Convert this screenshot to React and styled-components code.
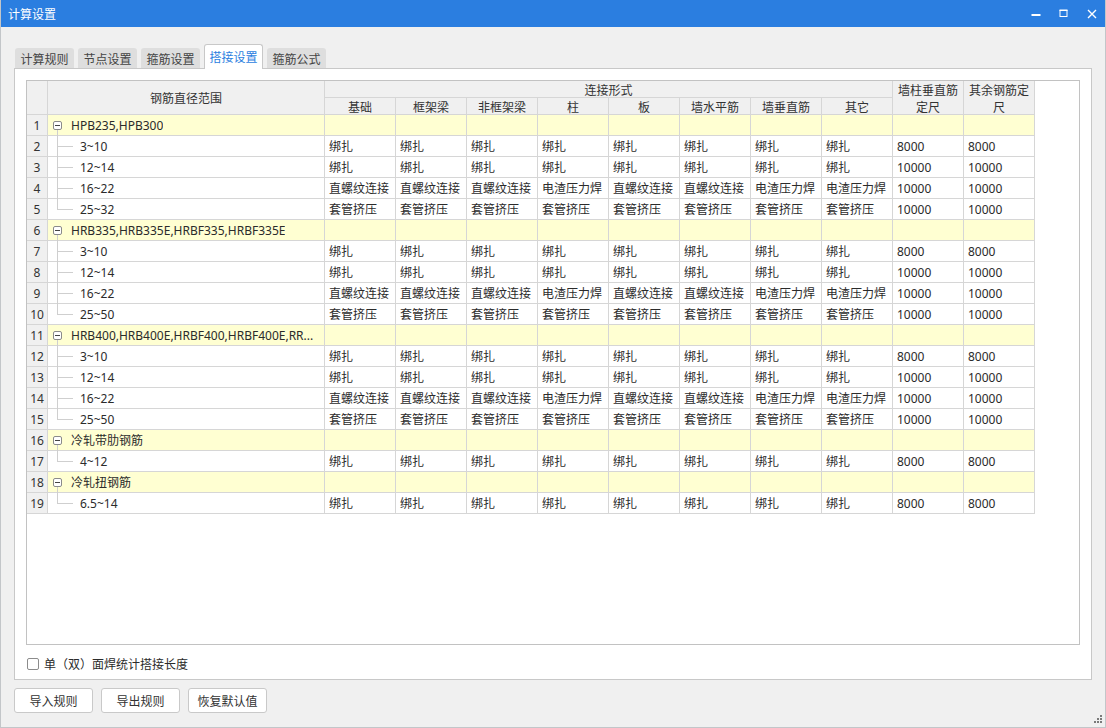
import styled, { createGlobalStyle } from 'styled-components'

const GlobalStyle = createGlobalStyle`
  html, body {
    margin: 0;
    padding: 0;
    background: #f0f0f0;
  }
  body {
    font-family: "Noto Sans", "Noto Sans CJK SC", sans-serif;
    font-size: 12px;
    color: #2b2b2b;
  }
`

const COLS = '21px 277px repeat(10, 71px)'
const LINE = '#d6d6d6'

const Window = styled.div`
  position: relative;
  width: 1106px;
  height: 728px;
  box-sizing: border-box;
  background: #f0f0f0;
  border: 1px solid #c3c6c9;
  border-top: none;
  display: flex;
  flex-direction: column;
  overflow: hidden;
`

const TitleBar = styled.div`
  height: 27px;
  margin: 0 -1px;
  background: #2b7ee0;
  display: flex;
  align-items: center;
  justify-content: space-between;
  padding: 0 0 0 8px;
  flex: none;
`

const TitleText = styled.span`
  color: #fff;
  font-size: 12px;
  font-family: "Noto Sans CJK SC", sans-serif;
`

const Controls = styled.div`
  display: flex;
  align-items: center;
  height: 100%;
`

const ControlButton = styled.span`
  width: 28px;
  height: 27px;
  display: flex;
  align-items: center;
  justify-content: center;
`

const Body = styled.div`
  padding: 17px 0 0 13px;
  display: flex;
  flex-direction: column;
`

const TabBar = styled.div`
  display: flex;
  align-items: flex-end;
  gap: 4px;
  height: 24px;
  padding-left: 1px;
`

const Tab = styled.div`
  box-sizing: border-box;
  width: 59px;
  height: ${p => (p.$active ? '25px' : '20px')};
  margin-bottom: ${p => (p.$active ? '-1px' : '0')};
  position: relative;
  z-index: ${p => (p.$active ? 1 : 0)};
  display: flex;
  align-items: center;
  justify-content: center;
  padding-bottom: ${p => (p.$active ? '2px' : '0')};
  background: ${p => (p.$active ? '#fff' : '#dedede')};
  border: ${p => (p.$active ? '1px solid #c8c8c8' : 'none')};
  border-bottom: none;
  border-radius: 3px 3px 0 0;
  color: ${p => (p.$active ? '#2b7ee0' : '#444')};
  font-family: "Noto Sans CJK SC", sans-serif;
`

const Panel = styled.div`
  box-sizing: border-box;
  width: 1078px;
  height: 612px;
  background: #fff;
  border: 1px solid #c8c8c8;
  padding: 11px 11px 0 11px;
  display: flex;
  flex-direction: column;
`

const GridFrame = styled.div`
  box-sizing: border-box;
  width: 1054px;
  height: 565px;
  border: 1px solid #c2c2c2;
  background: #fff;
  overflow: hidden;
`

const Header = styled.div`
  display: grid;
  grid-template-columns: ${COLS};
  grid-template-rows: 17px 17px;
  width: max-content;
`

const HeaderCell = styled.div`
  grid-column: ${p => p.$col};
  grid-row: ${p => p.$row};
  box-sizing: border-box;
  background: #f0f0f0;
  border-right: 1px solid ${LINE};
  border-bottom: 1px solid ${LINE};
  display: flex;
  align-items: center;
  justify-content: center;
  text-align: center;
  line-height: 17px;
  padding: ${p => (p.$wrap ? '0 4px' : '0')};
  color: #333;
  font-family: "Noto Sans CJK SC", sans-serif;
`

const Row = styled.div`
  display: grid;
  grid-template-columns: ${COLS};
  height: 21px;
  width: max-content;
  background: ${p => (p.$group ? '#ffffd2' : '#fff')};
`

const Cell = styled.div`
  box-sizing: border-box;
  border-right: 1px solid ${LINE};
  border-bottom: 1px solid ${LINE};
  display: flex;
  align-items: center;
  padding: 0 4px;
  white-space: nowrap;
  overflow: hidden;
`

const RowNum = styled(Cell)`
  background: #f0f0f0;
  justify-content: center;
  padding: 0;
  color: #333;
`

const NameCell = styled(Cell)`
  padding: 0 0 0 ${p => (p.$group ? '5px' : '9px')};
  align-items: ${p => (p.$group ? 'center' : 'stretch')};
  overflow: visible;
`

const Toggle = styled.span`
  position: relative;
  display: flex;
  width: 9px;
  height: 9px;

  &::after {
    content: '';
    position: absolute;
    left: 4px;
    top: 9px;
    height: 8px;
    border-left: 1px solid #cfcfcf;
  }
`

const GroupLabel = styled.span`
  margin-left: 9px;
  overflow: hidden;
  text-overflow: ellipsis;
  max-width: 250px;
`

const Guide = styled.span`
  position: relative;
  width: 16px;
  flex: none;

  &::before {
    content: '';
    position: absolute;
    left: 0;
    top: 0;
    bottom: ${p => (p.$last ? '50%' : '-1px')};
    border-left: 1px solid #cfcfcf;
  }

  &::after {
    content: '';
    position: absolute;
    left: 0;
    top: 50%;
    width: 16px;
    border-top: 1px solid #cfcfcf;
  }
`

const ChildLabel = styled.span`
  margin-left: 7px;
  display: flex;
  align-items: center;
`

const CheckRow = styled.label`
  display: flex;
  align-items: center;
  gap: 5px;
  margin: 10px 0 0 1px;
  font-family: "Noto Sans CJK SC", sans-serif;
`

const CheckBox = styled.span`
  box-sizing: border-box;
  width: 12px;
  height: 12px;
  border: 1px solid #8c8c8c;
  border-radius: 2px;
  background: #fff;
`

const Footer = styled.div`
  display: flex;
  gap: 8px;
  margin-top: 8px;
  padding-left: 0;
`

const Button = styled.button`
  box-sizing: border-box;
  width: 79px;
  height: 25px;
  background: #fff;
  border: 1px solid #c9c9c9;
  border-radius: 3px;
  font-family: "Noto Sans CJK SC", sans-serif;
  font-size: 12px;
  color: #333;
  padding: 0;
`

const Grip = styled.svg`
  position: absolute;
  right: 2px;
  bottom: 3px;
`

const SUBS = ['基础', '框架梁', '非框架梁', '柱', '板', '墙水平筋', '墙垂直筋', '其它']

const fill = (v, n = 8) => Array(n).fill(v)
const tie = len => [...fill('绑扎'), len, len]
const screw = [
  '直螺纹连接', '直螺纹连接', '直螺纹连接', '电渣压力焊',
  '直螺纹连接', '直螺纹连接', '电渣压力焊', '电渣压力焊', '10000', '10000'
]
const sleeve = [...fill('套管挤压'), '10000', '10000']

const groups = [
  {
    name: 'HPB235,HPB300',
    items: [
      ['3~10', tie('8000')],
      ['12~14', tie('10000')],
      ['16~22', screw],
      ['25~32', sleeve]
    ]
  },
  {
    name: 'HRB335,HRB335E,HRBF335,HRBF335E',
    items: [
      ['3~10', tie('8000')],
      ['12~14', tie('10000')],
      ['16~22', screw],
      ['25~50', sleeve]
    ]
  },
  {
    name: 'HRB400,HRB400E,HRBF400,HRBF400E,RR...',
    items: [
      ['3~10', tie('8000')],
      ['12~14', tie('10000')],
      ['16~22', screw],
      ['25~50', sleeve]
    ]
  },
  { name: '冷轧带肋钢筋', items: [['4~12', tie('8000')]] },
  { name: '冷轧扭钢筋', items: [['6.5~14', tie('8000')]] }
]

const MinusBox = () => (
  <svg width="9" height="9" viewBox="0 0 9 9">
    <rect x="0.5" y="0.5" width="8" height="8" rx="1.5" fill="#fff" stroke="#8a8a8a" />
    <line x1="2" y1="4.5" x2="7" y2="4.5" stroke="#444" />
  </svg>
)

const App = () => {
  let n = 0
  const rows = []
  groups.forEach(g => {
    n += 1
    rows.push(
      <Row key={`g${n}`} $group>
        <RowNum>{n}</RowNum>
        <NameCell $group>
          <Toggle><MinusBox /></Toggle>
          <GroupLabel>{g.name}</GroupLabel>
        </NameCell>
        {fill('', 10).map((_, i) => <Cell key={i} />)}
      </Row>
    )
    g.items.forEach(([range, values], idx) => {
      n += 1
      rows.push(
        <Row key={`r${n}`}>
          <RowNum>{n}</RowNum>
          <NameCell>
            <Guide $last={idx === g.items.length - 1} />
            <ChildLabel>{range}</ChildLabel>
          </NameCell>
          {values.map((v, i) => <Cell key={i}>{v}</Cell>)}
        </Row>
      )
    })
  })

  return (
    <>
      <GlobalStyle />
      <Window>
        <TitleBar>
          <TitleText>计算设置</TitleText>
          <Controls>
            <ControlButton>
              <svg width="10" height="10" viewBox="0 0 10 10">
                <rect x="0.5" y="5" width="9" height="2" fill="#fff" />
              </svg>
            </ControlButton>
            <ControlButton>
              <svg width="10" height="10" viewBox="0 0 10 10">
                <rect x="1" y="1.5" width="7" height="6" fill="none" stroke="#fff" strokeWidth="1" />
                <rect x="0.5" y="0.5" width="8" height="1.5" fill="#fff" />
              </svg>
            </ControlButton>
            <ControlButton>
              <svg width="10" height="10" viewBox="0 0 10 10">
                <path d="M1 1 L9 9 M9 1 L1 9" stroke="#fff" strokeWidth="1.4" />
              </svg>
            </ControlButton>
          </Controls>
        </TitleBar>

        <Body>
          <TabBar>
            <Tab>计算规则</Tab>
            <Tab>节点设置</Tab>
            <Tab>箍筋设置</Tab>
            <Tab $active>搭接设置</Tab>
            <Tab>箍筋公式</Tab>
          </TabBar>

          <Panel>
            <GridFrame>
              <Header>
                <HeaderCell $col="1" $row="1 / span 2" />
                <HeaderCell $col="2" $row="1 / span 2">钢筋直径范围</HeaderCell>
                <HeaderCell $col="3 / span 8" $row="1">连接形式</HeaderCell>
                {SUBS.map((s, i) => (
                  <HeaderCell key={s} $col={`${i + 3}`} $row="2">{s}</HeaderCell>
                ))}
                <HeaderCell $col="11" $row="1 / span 2" $wrap>墙柱垂直筋定尺</HeaderCell>
                <HeaderCell $col="12" $row="1 / span 2" $wrap>其余钢筋定尺</HeaderCell>
              </Header>
              {rows}
            </GridFrame>

            <CheckRow>
              <CheckBox />
              单（双）面焊统计搭接长度
            </CheckRow>
          </Panel>

          <Footer>
            <Button>导入规则</Button>
            <Button>导出规则</Button>
            <Button>恢复默认值</Button>
          </Footer>
        </Body>

        <Grip width="9" height="9" viewBox="0 0 9 9">
          <rect x="6" y="0" width="2" height="2" fill="#7a7a7a" />
          <rect x="3" y="3" width="2" height="2" fill="#7a7a7a" />
          <rect x="6" y="3" width="2" height="2" fill="#7a7a7a" />
          <rect x="0" y="6" width="2" height="2" fill="#7a7a7a" />
          <rect x="3" y="6" width="2" height="2" fill="#7a7a7a" />
          <rect x="6" y="6" width="2" height="2" fill="#7a7a7a" />
        </Grip>
      </Window>
    </>
  )
}

export default App
